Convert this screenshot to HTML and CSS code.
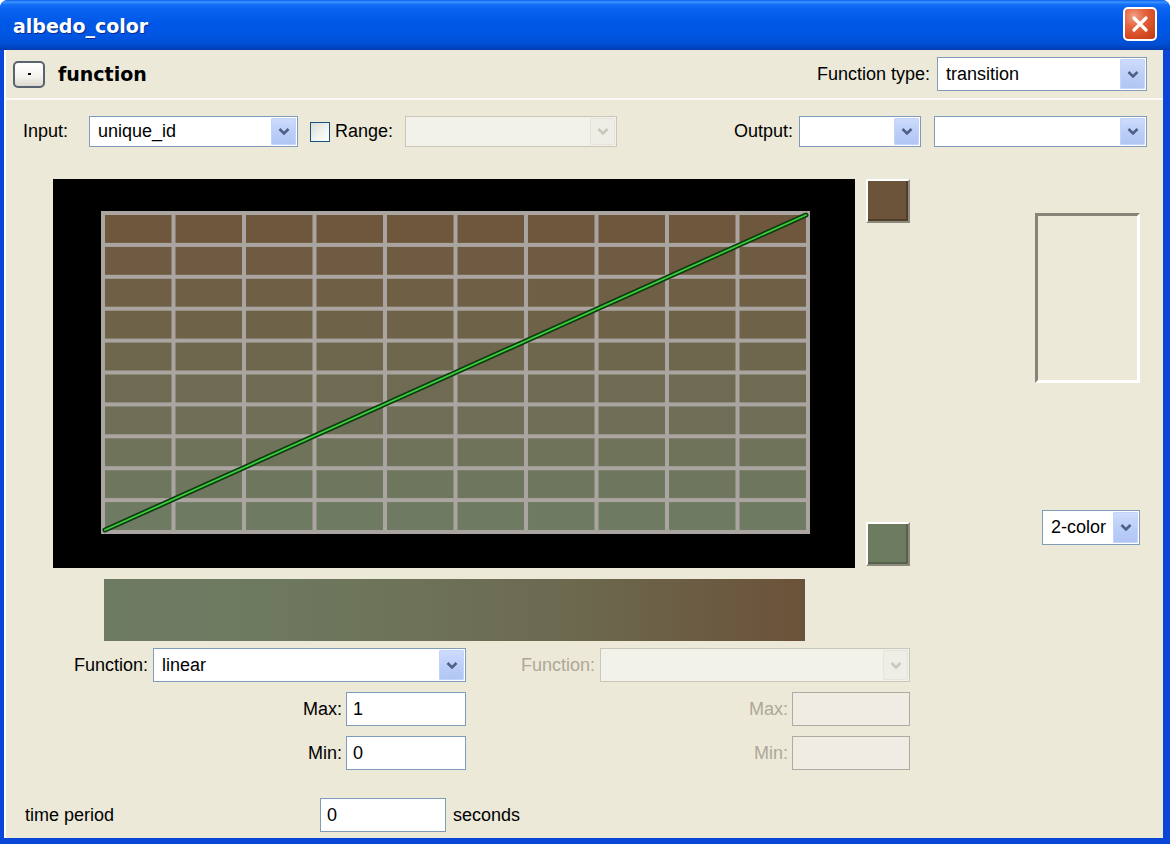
FILE: index.html
```html
<!DOCTYPE html>
<html>
<head>
<meta charset="utf-8">
<title>albedo_color</title>
<link rel="stylesheet" href="styles.css">
</head>
<body>
<div class="window">
  <div class="titlebar">
    <span class="title">albedo_color</span>
    <div class="close">
      <svg width="20" height="20" viewBox="0 0 20 20"><path d="M4 4 L16 16 M16 4 L4 16" stroke="#fff" stroke-width="3.2" stroke-linecap="round"/></svg>
    </div>
  </div>
  <div class="client">
    <div class="header">
      <div class="collapse"><span class="dot"></span></div>
      <span class="section">function</span>
      <span class="lbl ftype-lbl">Function type:</span>
      <div class="combo h34 w-ftype">
        <span class="val">transition</span>
        <span class="arrow"><svg width="12" height="9" viewBox="0 0 12 9"><polyline points="1.5,2 6,6.5 10.5,2" fill="none" stroke="#4d6185" stroke-width="2.6"/></svg></span>
      </div>
    </div>

    <div class="io-row">
      <span class="lbl input-lbl">Input:</span>
      <div class="combo h31 w-input">
        <span class="val">unique_id</span>
        <span class="arrow"><svg width="12" height="9" viewBox="0 0 12 9"><polyline points="1.5,2 6,6.5 10.5,2" fill="none" stroke="#4d6185" stroke-width="2.6"/></svg></span>
      </div>
      <span class="check"></span>
      <span class="lbl range-lbl">Range:</span>
      <div class="combo h31 disabled w-range">
        <span class="val"></span>
        <span class="arrow"><svg width="12" height="9" viewBox="0 0 12 9"><polyline points="1.5,2 6,6.5 10.5,2" fill="none" stroke="#c9c7ba" stroke-width="2.6"/></svg></span>
      </div>
      <span class="lbl output-lbl">Output:</span>
      <div class="combo h31 w-out1">
        <span class="val"></span>
        <span class="arrow"><svg width="12" height="9" viewBox="0 0 12 9"><polyline points="1.5,2 6,6.5 10.5,2" fill="none" stroke="#4d6185" stroke-width="2.6"/></svg></span>
      </div>
      <div class="combo h31 w-out2">
        <span class="val"></span>
        <span class="arrow"><svg width="12" height="9" viewBox="0 0 12 9"><polyline points="1.5,2 6,6.5 10.5,2" fill="none" stroke="#4d6185" stroke-width="2.6"/></svg></span>
      </div>
    </div>

    <div class="top-section">
      <svg class="graph" width="802" height="389" viewBox="0 0 802 389">
        <defs>
          <linearGradient id="rows" x1="0" y1="0" x2="0" y2="1">
            <stop offset="0" stop-color="#6e573d"/><stop offset="0.1" stop-color="#6e573d"/>
            <stop offset="0.1" stop-color="#6e5b41"/><stop offset="0.2" stop-color="#6e5b41"/>
            <stop offset="0.2" stop-color="#6e5f45"/><stop offset="0.3" stop-color="#6e5f45"/>
            <stop offset="0.3" stop-color="#6e6349"/><stop offset="0.4" stop-color="#6e6349"/>
            <stop offset="0.4" stop-color="#6e674d"/><stop offset="0.5" stop-color="#6e674d"/>
            <stop offset="0.5" stop-color="#6e6b52"/><stop offset="0.6" stop-color="#6e6b52"/>
            <stop offset="0.6" stop-color="#6e6f56"/><stop offset="0.7" stop-color="#6e6f56"/>
            <stop offset="0.7" stop-color="#6e735a"/><stop offset="0.8" stop-color="#6e735a"/>
            <stop offset="0.8" stop-color="#6e775e"/><stop offset="0.9" stop-color="#6e775e"/>
            <stop offset="0.9" stop-color="#6e7b62"/><stop offset="1" stop-color="#6e7b62"/>
          </linearGradient>
          <pattern id="cells" x="50" y="34" width="70.5" height="31.9" patternUnits="userSpaceOnUse">
            <rect x="0" y="0" width="70.5" height="31.9" fill="none" stroke="#aba5a1" stroke-width="4"/>
          </pattern>
        </defs>
        <rect x="0" y="0" width="802" height="389" fill="#000"/>
        <rect x="50" y="34" width="705" height="319" fill="url(#rows)"/>
        <rect x="50" y="34" width="705" height="319" fill="url(#cells)"/>
        <rect x="50" y="34" width="705" height="319" fill="none" stroke="#aba5a1" stroke-width="4"/>
        <line x1="52" y1="351" x2="753" y2="36" stroke="#0b3a0e" stroke-width="5" stroke-linecap="round"/>
        <line x1="52" y1="351" x2="753" y2="36" stroke="#3ccc3c" stroke-width="1.8" stroke-linecap="round"/>
      </svg>
      <div class="swatch-col">
        <div class="swatch swatch-top"></div>
        <div class="swatch swatch-bottom"></div>
      </div>
      <div class="right-col">
        <div class="preview"></div>
        <div class="combo h35 w-mode">
          <span class="val">2-color</span>
          <span class="arrow"><svg width="12" height="9" viewBox="0 0 12 9"><polyline points="1.5,2 6,6.5 10.5,2" fill="none" stroke="#4d6185" stroke-width="2.6"/></svg></span>
        </div>
      </div>
    </div>

    <div class="ramp"></div>

    <div class="params">
      <span class="lbl plabel">Function:</span>
      <div class="combo h34">
        <span class="val">linear</span>
        <span class="arrow"><svg width="12" height="9" viewBox="0 0 12 9"><polyline points="1.5,2 6,6.5 10.5,2" fill="none" stroke="#4d6185" stroke-width="2.6"/></svg></span>
      </div>
      <span class="lbl plabel dis">Function:</span>
      <div class="combo h34 disabled">
        <span class="val"></span>
        <span class="arrow"><svg width="12" height="9" viewBox="0 0 12 9"><polyline points="1.5,2 6,6.5 10.5,2" fill="none" stroke="#c9c7ba" stroke-width="2.6"/></svg></span>
      </div>

      <div class="pair col2"><span class="lbl">Max:</span><div class="field w-minmax">1</div></div>
      <div class="pair col4"><span class="lbl dis">Max:</span><div class="field disabled w-minmax2"></div></div>

      <div class="pair col2"><span class="lbl">Min:</span><div class="field w-minmax">0</div></div>
      <div class="pair col4"><span class="lbl dis">Min:</span><div class="field disabled w-minmax2"></div></div>
    </div>

    <div class="time-row">
      <span class="lbl time-lbl">time period</span>
      <div class="field w-time">0</div>
      <span class="lbl seconds">seconds</span>
    </div>
  </div>
</div>
</body>
</html>
```

FILE: styles.css
```css
html, body {
  margin: 0;
  padding: 0;
  background: #ffffff;
}

body {
  font-family: "Liberation Sans", Arial, sans-serif;
  font-size: 18px;
  color: #000;
}

.window {
  width: 1170px;
  height: 844px;
  display: flex;
  flex-direction: column;
  background: #0a47d8;
  border-radius: 8px 8px 0 0;
  overflow: hidden;
}

.titlebar {
  height: 50px;
  flex: 0 0 50px;
  display: flex;
  align-items: center;
  padding: 0 13px 0 13px;
  box-sizing: border-box;
  background: linear-gradient(to bottom, #0a5ff0 0%, #3d95ff 4%, #1470f8 9%, #0a62f0 18%, #0058e8 45%, #0055e2 70%, #0050d8 85%, #0046c6 94%, #003cae 100%);
}

.title {
  font-family: "DejaVu Sans", Verdana, sans-serif;
  font-weight: bold;
  font-size: 19px;
  color: #fff;
  text-shadow: 1px 1px 0 #0c2a8c;
  margin-top: 2px;
}

.close {
  margin-left: auto;
  width: 34px;
  height: 34px;
  box-sizing: border-box;
  border: 2px solid #ffffff;
  border-radius: 5px;
  background: radial-gradient(circle at 30% 25%, #f2a088 0%, #e5643e 35%, #d34a22 70%, #c23a14 100%);
  display: flex;
  align-items: center;
  justify-content: center;
  margin-top: -2px;
}

.client {
  flex: 1;
  margin: 0 7px 6px 4px;
  background: #ece9d8;
  display: flex;
  flex-direction: column;
  box-shadow: inset 3px 0 0 -1px #ffffff;
}

.header {
  height: 48px;
  display: flex;
  align-items: center;
  padding: 0 16px 0 9px;
  border-bottom: 2px solid #fbfaf6;
  box-sizing: content-box;
}

.collapse {
  width: 32px;
  height: 27px;
  box-sizing: border-box;
  border: 2px solid #59626e;
  border-radius: 5px;
  background: linear-gradient(to bottom, #ffffff 0%, #f4f2ec 60%, #dcd8ce 100%);
  display: flex;
  align-items: center;
  justify-content: center;
}

.dot {
  width: 3px;
  height: 2px;
  background: #000;
}

.section {
  font-family: "DejaVu Sans", Verdana, sans-serif;
  font-weight: bold;
  font-size: 19px;
  margin-left: 13px;
}

.lbl {
  white-space: nowrap;
}

.lbl.dis {
  color: #aca899;
}

.ftype-lbl {
  margin-left: auto;
  margin-right: 7px;
}

/* combo boxes */
.combo {
  display: flex;
  align-items: stretch;
  box-sizing: border-box;
  border: 1px solid #7f9db9;
  background: #fff;
  padding: 1px;
}

.combo .val {
  flex: 1;
  display: flex;
  align-items: center;
  padding-left: 7px;
  white-space: nowrap;
  overflow: hidden;
}

.combo .arrow {
  width: 25px;
  flex: 0 0 25px;
  display: flex;
  align-items: center;
  justify-content: center;
  border-radius: 2px;
  background: linear-gradient(to bottom, #cfdcfd 0%, #bccff8 50%, #b1c5f4 100%);
  box-shadow: inset 0 0 0 1px #c3d3fb;
}

.combo.disabled {
  border-color: #c9c7ba;
  background: #f2f1ea;
}

.combo.disabled .arrow {
  background: #efeee6;
  box-shadow: inset 0 0 0 1px #e6e4da;
}

.h31 { height: 31px; }
.h34 { height: 34px; }
.h35 { height: 35px; }

.w-ftype { width: 210px; }
.w-input { width: 209px; }
.w-range { width: 212px; }
.w-out1 { width: 122px; margin-right: 13px; }
.w-out2 { width: 213px; }
.w-mode { width: 98px; }

.io-row {
  display: flex;
  align-items: center;
  margin-top: 16px;
  height: 31px;
  padding: 0 16px 0 19px;
}

.input-lbl {
  width: 66px;
}

.check {
  width: 20px;
  height: 20px;
  box-sizing: border-box;
  border: 1px solid #1c5180;
  background: linear-gradient(135deg, #dcdcd7 0%, #f4f4f0 60%, #ffffff 100%);
  margin-left: 12px;
}

.range-lbl {
  width: 70px;
  margin-left: 5px;
}

.output-lbl {
  margin-left: auto;
  margin-right: 6px;
}

/* graph area */
.top-section {
  display: flex;
  margin-top: 32px;
  padding-left: 49px;
  height: 389px;
}

.graph {
  display: block;
  flex: 0 0 802px;
}

.swatch-col {
  margin-left: 11px;
  width: 44px;
  display: flex;
  flex-direction: column;
  justify-content: space-between;
  padding: 0 0 2px 0;
}

.swatch {
  width: 44px;
  height: 44px;
  box-sizing: border-box;
  border: 2px solid;
  border-color: #ffffff #8d8a7d #8d8a7d #ffffff;
}

.swatch-top {
  background: #6b5439;
  box-shadow: inset -2px -2px 0 #4e3e2a;
}

.swatch-bottom {
  background: #6d7b60;
  box-shadow: inset -2px -2px 0 #56634c;
}

.right-col {
  margin-left: auto;
  margin-right: 23px;
  width: 105px;
  display: flex;
  flex-direction: column;
  align-items: flex-end;
}

.preview {
  margin-top: 34px;
  width: 105px;
  height: 170px;
  box-sizing: border-box;
  border: 3px solid;
  border-color: #878478 #ffffff #ffffff #878478;
}

.w-mode {
  margin-top: 127px;
}

.ramp {
  margin: 11px 0 0 100px;
  width: 701px;
  height: 62px;
  background: linear-gradient(to right, #6e7b63 0%, #6e7a60 20%, #6d7258 45%, #6c6a50 65%, #6b5c43 85%, #6b5238 100%);
}

.params {
  margin: 7px 0 0 49px;
  display: grid;
  grid-template-columns: 100px 313px 134px 310px;
  grid-template-rows: 34px 34px 34px;
  row-gap: 10px;
  align-items: center;
}

.plabel {
  text-align: right;
  padding-right: 5px;
}

.pair {
  display: flex;
  align-items: center;
  justify-content: flex-end;
  height: 34px;
}

.col2 { grid-column: 2; }
.col4 { grid-column: 4; }

.pair .lbl {
  margin-right: 4px;
}

.field {
  height: 34px;
  box-sizing: border-box;
  border: 1px solid #7f9db9;
  background: #fff;
  display: flex;
  align-items: center;
  padding-left: 6px;
}

.field.disabled {
  border-color: #aeaca2;
  background: #eeece3;
}

.w-minmax { width: 120px; }
.w-minmax2 { width: 118px; }

.time-row {
  display: flex;
  align-items: center;
  margin-top: 28px;
  padding-left: 21px;
  height: 34px;
}

.time-lbl {
  width: 295px;
}

.w-time {
  width: 126px;
}

.seconds {
  margin-left: 7px;
}
```
